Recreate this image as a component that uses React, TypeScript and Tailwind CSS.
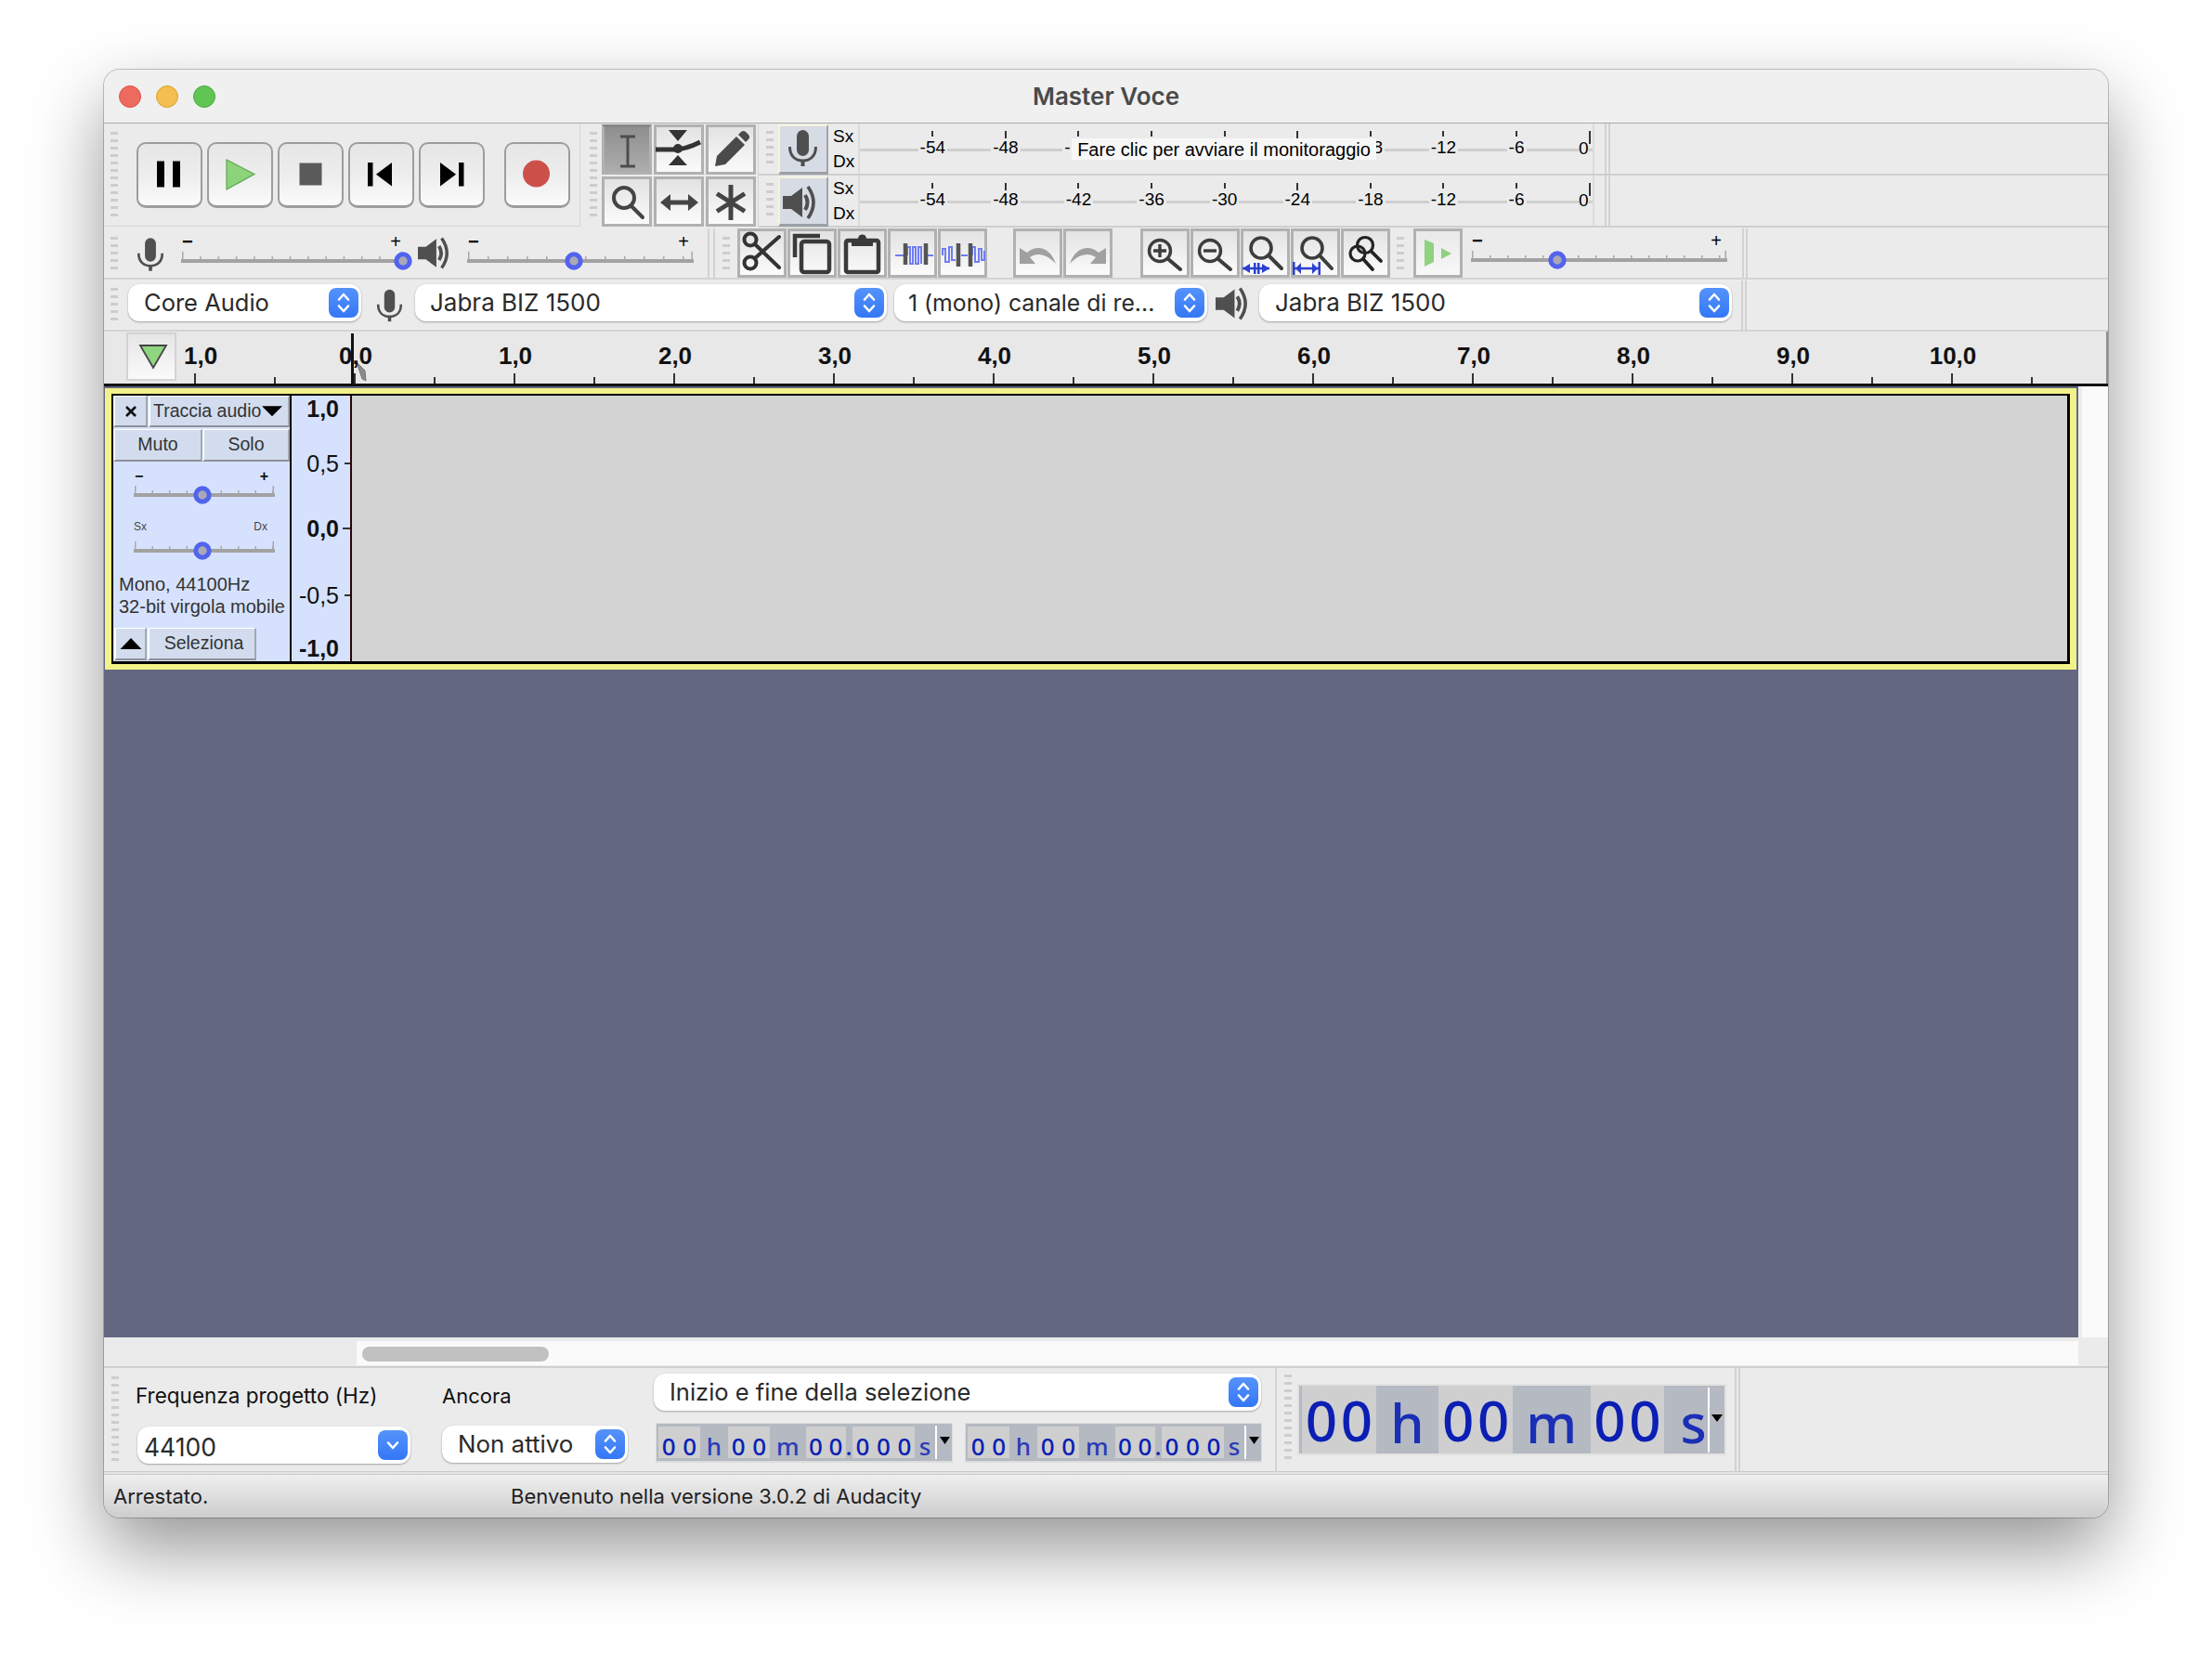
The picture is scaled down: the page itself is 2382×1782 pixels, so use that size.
import type { ReactNode } from "react";

const ARIAL = "[font-family:'Liberation_Sans',Arial,sans-serif]";
const SANS = "[font-family:Inter,sans-serif]";
const LCD = "[font-family:'Noto_Sans',sans-serif]";

const toolFrame =
  "flex shrink-0 items-center justify-center overflow-visible border-[3px] border-[#b1b1b1] bg-gradient-to-b";
const toolBtn = `${toolFrame} from-[#e3e3e3] to-[#fbfbfb]`;

function Grip({ className }: { className: string }) {
  return (
    <div
      className={`w-[8px] shrink-0 bg-[repeating-linear-gradient(to_bottom,#cdcdcd_0_3px,transparent_3px_8px)] ${className}`}
    />
  );
}

function DoubleSep({ wide }: { wide?: boolean }) {
  return (
    <div className={`flex h-full shrink-0 ${wide ? "gap-[4px]" : "gap-[2px]"}`}>
      <div className="w-[2px] bg-[#d2d2d2]" />
      <div className="w-[2px] bg-[#d2d2d2]" />
    </div>
  );
}

function Ico({ size = 53, children }: { size?: number; children: ReactNode }) {
  return (
    <svg viewBox={`0 0 ${size} ${size}`} width={size} height={size} className="-m-[3px] shrink-0 overflow-visible">
      {children}
    </svg>
  );
}

function TransportButton({ children }: { children: ReactNode }) {
  return (
    <button className="flex h-[71px] w-[71px] shrink-0 items-center justify-center rounded-[10px] border-2 border-b-[3px] border-[#9d9d9d] bg-gradient-to-b from-[#e6e6e6] via-[#ededed] to-[#fbfbfb]">
      <svg viewBox="0 0 71 71" width="71" height="71" className="-m-[2px] shrink-0">
        {children}
      </svg>
    </button>
  );
}

function MicShape() {
  return (
    <g fill="none" stroke="#4f4f4f">
      <rect x="20" y="6" width="13" height="28" rx="6.5" fill="#4f4f4f" stroke="none" />
      <path d="M12.5 24c0 10 6 15 14 15s14-5 14-15" strokeWidth="3" />
      <path d="M26.5 39v6" strokeWidth="4" />
    </g>
  );
}

function SpeakerShape() {
  return (
    <g fill="none" stroke="#4f4f4f">
      <path d="M5 21h9l12-9v32l-12-9H5z" fill="#4f4f4f" stroke="none" />
      <path d="M29 20q5 8 0 16" strokeWidth="4" />
      <path d="M32 11q12 17 0 34" strokeWidth="3.6" />
    </g>
  );
}

function Slider({
  width,
  thumb,
  step,
  minus,
  plus,
  labelClass,
  labelHeight,
}: {
  width: number;
  thumb: number;
  step: number;
  minus: ReactNode;
  plus: ReactNode;
  labelClass: string;
  labelHeight: string;
}) {
  const ticks: number[] = [];
  for (let x = 1; x < width - 1; x += step) ticks.push(x);
  return (
    <div className="shrink-0" style={{ width }}>
      <div className={`flex justify-between ${labelHeight} ${labelClass}`}>
        <span>{minus}</span>
        <span>{plus}</span>
      </div>
      <svg width={width} height="24" className="block overflow-visible">
        <rect x="0" y="10" width={width} height="4" fill="#a2a2a2" />
        {ticks.map((x, i) => (
          <rect key={x} x={x} y={i === 0 ? 2 : 7} width="1.5" height={i === 0 ? 9 : 4} fill="#a8a8a8" />
        ))}
        <rect x={width - 2.5} y="2" width="1.5" height="9" fill="#a8a8a8" />
        <circle cx={thumb} cy="12" r="7.2" fill="#a9a9b6" stroke="#5263ee" strokeWidth="5" />
      </svg>
    </div>
  );
}

function Stepper({ single }: { single?: boolean }) {
  return (
    <div className="flex h-[32px] w-[32px] shrink-0 items-center justify-center rounded-[8px] bg-gradient-to-b from-[#5593fb] to-[#3477f5]">
      <svg viewBox="0 0 32 32" width="32" height="32" fill="none" stroke="#fff" strokeWidth="2.6" strokeLinecap="round" strokeLinejoin="round">
        {single ? (
          <path d="M11 13.5l5 5.5 5-5.5" />
        ) : (
          <>
            <path d="M11 12.5l5-5.5 5 5.5" />
            <path d="M11 19.5l5 5.5 5-5.5" />
          </>
        )}
      </svg>
    </div>
  );
}

function Combo({
  text,
  className,
  single,
  textClass = "text-[25.5px]",
}: {
  text: string;
  className: string;
  single?: boolean;
  textClass?: string;
}) {
  return (
    <div
      className={`flex h-[40px] shrink-0 items-center justify-between rounded-[12px] bg-white pr-[3px] shadow-[0_1px_2px_rgba(0,0,0,0.3),0_0_1px_rgba(0,0,0,0.15)] ${className}`}
    >
      <span className={`${SANS} leading-none whitespace-nowrap text-[#2a2a2a] ${textClass}`}>{text}</span>
      <Stepper single={single} />
    </div>
  );
}

const METER_LABELS = [
  { t: "-54" },
  { t: "-48", tall: true },
  { t: "-42", covered: "-", shift: "-translate-x-[12px]" },
  { t: "-36", covered: "" },
  { t: "-30", covered: "" },
  { t: "-24", tall: true, covered: "" },
  { t: "-18", covered: "8", shift: "translate-x-[8px]" },
  { t: "-12" },
  { t: "-6" },
];

function MeterRow({ icon, overlay }: { icon: ReactNode; overlay?: boolean }) {
  return (
    <div className="flex h-[56px] items-stretch border-b-2 border-[#cfcfcf] bg-[#ebebeb]">
      <Grip className="mt-[8px] ml-[8px] h-[38px]" />
      <div className="mt-[1px] ml-[5px] flex h-[54px] w-[54px] shrink-0 items-center justify-center border-t-2 border-r-2 border-b-[3px] border-l-2 border-t-[#f3f3df] border-r-[#a0a4ac] border-b-[#9ca0a8] border-l-[#f3f3df] bg-[#d6dbe4]">
        <svg viewBox="0 0 54 54" width="54" height="54" className="shrink-0">
          {icon}
        </svg>
      </div>
      <div className={`${ARIAL} ml-[5px] flex w-[27px] shrink-0 flex-col text-[19px] leading-[27px] text-black`}>
        <span>Sx</span>
        <span>Dx</span>
      </div>
      <div className="relative flex w-[793px] shrink-0 border-r-2 border-l-2 border-[#dcdcdc] pl-[39px]">
        <div className="absolute top-[27px] right-0 left-0 h-[3px] bg-[#cfcfcf]" />
        {METER_LABELS.map((l) => {
          const text = overlay && l.covered !== undefined ? l.covered : l.t;
          return (
            <div key={l.t} className="relative flex w-[78.6px] shrink-0 flex-col items-center pt-[8px]">
              <div className={`w-[2px] bg-[#333] ${l.tall ? "h-[8px]" : "h-[6px]"}`} />
              {text && (
                <span
                  className={`${ARIAL} bg-[#ebebeb] px-[2px] text-[19px] leading-[20px] text-black ${l.tall ? "" : "pt-[2px]"} ${overlay && l.shift ? l.shift : ""}`}
                >
                  {text}
                </span>
              )}
            </div>
          );
        })}
        <div className="relative ml-[28px] flex w-[10px] shrink-0 flex-col items-center pt-[17px]">
          <span className={`${ARIAL} bg-[#ebebeb] text-[19px] leading-[20px] text-black`}>0</span>
        </div>
        <div className="relative mt-[8px] ml-[1px] h-[14px] w-[2px] bg-[#333]" />
        {overlay && (
          <div className={`${ARIAL} absolute top-[16px] left-[228px] flex h-[23px] w-[328px] items-center justify-center bg-[#f7f7f7] text-[20px] whitespace-nowrap text-black`}>
            Fare clic per avviare il monitoraggio
          </div>
        )}
      </div>
      <div className="ml-[11px]">
        <DoubleSep />
      </div>
    </div>
  );
}

function Digits({ text, w, className }: { text: string; w: string; className: string }) {
  return (
    <span className={`flex h-full items-center justify-center ${className}`}>
      {text.split("").map((d, i) => (
        <span key={i} className={`block text-center ${w}`}>
          {d}
        </span>
      ))}
    </span>
  );
}

function SmallTime() {
  const cell = "bg-[#cfcfcf] pt-[8px]";
  const unit = "pt-[8px] justify-center";
  return (
    <div className={`${LCD} flex h-[43px] w-[320px] shrink-0 items-center border border-b-2 border-[#dcdcdc] bg-[#b5b9c2] pr-0 pl-[2px] text-[26px] font-medium text-[#0b1fb4]`}>
      <div className="flex h-[34px] w-[298px] shrink-0">
        <Digits text="00" w="w-[22.5px]" className={cell} />
        <span className={`flex w-[30px] items-center text-[#2a3cb8] ${unit}`}>h</span>
        <Digits text="00" w="w-[22.5px]" className={cell} />
        <span className={`flex w-[39px] items-center text-[#2a3cb8] ${unit}`}>m</span>
        <Digits text="00" w="w-[21.5px]" className={cell} />
        <span className="flex w-[7px] items-center justify-center pt-[8px]">.</span>
        <Digits text="000" w="w-[22.5px]" className={cell} />
        <span className={`flex w-[22px] items-center text-[#2a3cb8] ${unit}`}>s</span>
      </div>
      <div className="h-[36px] w-[2px] shrink-0 bg-white" />
      <svg width="17" height="10" viewBox="0 0 17 10" className="mb-[4px] shrink-0">
        <path d="M3 1h11l-5.5 8z" fill="#000" />
      </svg>
    </div>
  );
}

function BigTime() {
  const cell = "bg-[#cfcfcf]";
  const unit = "flex items-center justify-center pt-[6px] text-[#1a2fb6]";
  return (
    <div className={`${LCD} mt-[17px] ml-[6px] flex h-[77px] w-[462px] shrink-0 items-center border-2 border-[#e2e2e2] bg-[#b5b9c2] pl-[3px] text-[60px] leading-none font-medium text-[#0b1fb4]`}>
      <Digits text="00" w="w-[38px]" className={`${cell} h-[68px] w-[80px]`} />
      <span className={`${unit} w-[68px] text-[58px]`}>h</span>
      <Digits text="00" w="w-[38px]" className={`${cell} h-[68px] w-[80px]`} />
      <span className={`${unit} w-[84px] text-[58px]`}>m</span>
      <Digits text="00" w="w-[38px]" className={`${cell} h-[68px] w-[80px]`} />
      <span className={`${unit} w-[47px] pl-[16px] text-[58px]`}>s</span>
      <div className="h-[70px] w-[2px] shrink-0 bg-white" />
      <svg width="16" height="10" viewBox="0 0 16 10" className="mb-[4px] shrink-0">
        <path d="M2 1h12l-6 8z" fill="#000" />
      </svg>
    </div>
  );
}

function TrackBtn({ className, children }: { className: string; children: ReactNode }) {
  return (
    <div
      className={`${ARIAL} flex shrink-0 items-center justify-center border-t border-r-2 border-b-2 border-l-2 border-t-white border-r-[#a3a8b0] border-b-[#8d9096] border-l-white bg-[#d2dcee] text-[19.5px] whitespace-nowrap text-[#333] ${className}`}
    >
      {children}
    </div>
  );
}

function TrackPanel() {
  return (
    <div className="flex w-[190px] shrink-0 flex-col bg-[#d6e2fd]">
      <div className="flex gap-[1px]">
        <TrackBtn className="h-[34px] w-[37px]">
          <svg width="14" height="14" viewBox="0 0 14 14">
            <path d="M2 2l10 10M12 2L2 12" stroke="#111" strokeWidth="2.6" />
          </svg>
        </TrackBtn>
        <TrackBtn className="h-[34px] w-[152px] justify-start gap-[1px] pl-[3px]">
          <span>Traccia audio</span>
          <svg width="22" height="12" viewBox="0 0 23 12" className="shrink-0">
            <path d="M0 0h23l-11.5 11.5z" fill="#000" />
          </svg>
        </TrackBtn>
      </div>
      <div className="mt-[2px] flex">
        <TrackBtn className="h-[35px] w-[96px]">Muto</TrackBtn>
        <TrackBtn className="h-[35px] w-[94px]">Solo</TrackBtn>
      </div>
      <div className="mt-[8px] ml-[22px]">
        <Slider
          width={152}
          thumb={74}
          step={18.5}
          minus={<span className="pl-[1px] font-bold">−</span>}
          plus={<span className="pr-[7px] font-bold">+</span>}
          labelClass={`${ARIAL} text-[16px] leading-[16px] text-[#111]`}
          labelHeight="h-[16px]"
        />
      </div>
      <div className="mt-[14px] ml-[22px]">
        <Slider
          width={152}
          thumb={74}
          step={18.5}
          minus="Sx"
          plus={<span className="pr-[8px]">Dx</span>}
          labelClass={`${ARIAL} text-[12px] leading-[16px] text-[#444]`}
          labelHeight="h-[22px]"
        />
      </div>
      <div className={`${ARIAL} mt-[12px] ml-[6px] text-[20px] leading-[24px] whitespace-nowrap text-[#333]`}>
        <div>Mono, 44100Hz</div>
        <div>32-bit virgola mobile</div>
      </div>
      <div className="mt-auto mb-[1px] flex gap-[1px] pl-[1px]">
        <TrackBtn className="h-[35px] w-[35px]">
          <svg width="24" height="12" viewBox="0 0 24 12">
            <path d="M12 0l11.5 12H.5z" fill="#000" />
          </svg>
        </TrackBtn>
        <TrackBtn className="h-[35px] w-[117px] pl-[4px]">Seleziona</TrackBtn>
      </div>
    </div>
  );
}

const AMP_LABELS = [
  { t: "1,0", bold: true, mt: "mt-[1px]", tick: "" },
  { t: "0,5", mt: "mt-[33px]", tick: "w-[6px]" },
  { t: "0,0", bold: true, mt: "mt-[44px]", tick: "w-[8px]" },
  { t: "-0,5", mt: "mt-[46px]", tick: "w-[6px]" },
  { t: "-1,0", bold: true, mt: "mt-[31px]", tick: "" },
];

function AmpRuler() {
  return (
    <div className={`${ARIAL} w-[63px] shrink-0 bg-[#d6e2fd] text-[25px] text-[#111]`}>
      {AMP_LABELS.map((l) => (
        <div key={l.t} className={`flex h-[26px] items-center ${l.mt} ${l.bold ? "font-bold" : ""}`}>
          <span className="ml-auto leading-none">{l.t}</span>
          <span className="ml-[2px] flex w-[10px] justify-end">
            {l.tick && <span className={`h-[2px] bg-[#333] ${l.tick}`} />}
          </span>
        </div>
      ))}
    </div>
  );
}

export default function App() {
  const rulerLabels = ["0,0", "1,0", "2,0", "3,0", "4,0", "5,0", "6,0", "7,0", "8,0", "9,0", "10,0"];
  const rulerTicks: number[] = [];
  for (let n = -1; n <= 10; n++) rulerTicks.push(269 + 172 * n);

  return (
    <div className="h-[1782px] w-[2382px] overflow-hidden bg-white pt-[75px] pl-[112px]">
      <div className="flex h-[1559px] w-[2158px] flex-col overflow-hidden rounded-[17px] bg-[#ebebeb] shadow-[0_0_0_1px_rgba(0,0,0,0.22),0_34px_80px_rgba(0,0,0,0.42)]">
        {/* title bar */}
        <div className="grid h-[58px] shrink-0 grid-cols-[1fr_auto_1fr] items-center border-b border-[#aaaaaa] bg-[#f0f0f0] pl-[16px]">
          <div className="flex gap-[16px]">
            <div className="h-[24px] w-[24px] rounded-full border border-[#d9534a] bg-[#ed6a5e]" />
            <div className="h-[24px] w-[24px] rounded-full border border-[#d9a32f] bg-[#f4bf4f]" />
            <div className="h-[24px] w-[24px] rounded-full border border-[#4aa83e] bg-[#61c554]" />
          </div>
          <div className={`${SANS} pr-[16px] text-[26px] font-semibold text-[#4a4a4a]`}>Master Voce</div>
        </div>

        {/* transport, tools and meters */}
        <div className="flex h-[112px] shrink-0 bg-[#ebebeb]">
          <div className="flex h-[111px] w-[513px] shrink-0 items-center border-r border-b border-[#d4d4d4]">
            <Grip className="ml-[7px] h-[92px]" />
            <div className="ml-[20px] flex gap-[5px]">
              <TransportButton>
                <rect x="22" y="21.5" width="8" height="28" fill="#000" />
                <rect x="39" y="21.5" width="8" height="28" fill="#000" />
              </TransportButton>
              <TransportButton>
                <path d="M21 20l30 15.5L21 52z" fill="#8bd47a" stroke="#61a653" strokeWidth="1.2" />
              </TransportButton>
              <TransportButton>
                <rect x="23.5" y="23.5" width="24" height="24" fill="#5a5a5a" />
              </TransportButton>
              <TransportButton>
                <rect x="21" y="23" width="5.5" height="25.5" fill="#000" />
                <path d="M47 23v25.5L30 35.7z" fill="#000" />
              </TransportButton>
              <TransportButton>
                <path d="M23 23v25.5l17-12.8z" fill="#000" />
                <rect x="43" y="23" width="5.5" height="25.5" fill="#000" />
              </TransportButton>
            </div>
            <div className="ml-[21px]">
              <TransportButton>
                <circle cx="34.5" cy="35" r="14.5" fill="#cc4f4a" />
              </TransportButton>
            </div>
          </div>

          <Grip className="mt-[9px] ml-[10px] h-[92px]" />
          <div className="mt-[1px] ml-[5px] grid h-[110px] grid-cols-[repeat(3,54px)] grid-rows-[repeat(2,54px)] gap-[2px]">
            <div className={`${toolFrame} border-[#a9a9a9] border-t-[#868686] from-[#8f8f8f] to-[#adadad]`}>
              <Ico size={54}>
                <path d="M20 13h16M28 13v32M20 45h16" stroke="#4d4d4d" strokeWidth="3" fill="none" />
              </Ico>
            </div>
            <div className={toolBtn}>
              <Ico size={54}>
                <path d="M16 6h20L26 18zM26 33l10 11H16z" fill="#333" />
                <path d="M2 27h20c9 0 18-3 28-8" stroke="#333" strokeWidth="5" fill="none" />
                <circle cx="26" cy="26" r="5" fill="#333" />
              </Ico>
            </div>
            <div className={toolBtn}>
              <Ico size={54}>
                <path d="M10 45l2-11 21-21 9 9-21 21z" fill="#4a4a4a" />
                <path d="M35 11l3-3c1.500-1.500 3.500-1.500 5 0l3 3c1.500 1.500 1.500 3.500 0 5l-3 3z" fill="#4a4a4a" />
              </Ico>
            </div>
            <div className={toolBtn}>
              <Ico size={54}>
                <circle cx="24" cy="23" r="11" fill="none" stroke="#444" strokeWidth="4" />
                <path d="M32 32l12 12" stroke="#444" strokeWidth="4" strokeLinecap="round" />
              </Ico>
            </div>
            <div className={toolBtn}>
              <Ico size={54}>
                <path d="M17 28h21" stroke="#444" strokeWidth="5" />
                <path d="M7 28l11-9v18zM48 28l-11-9v18z" fill="#444" />
              </Ico>
            </div>
            <div className={toolBtn}>
              <Ico size={54}>
                <path d="M27 9v38M12 18.500l30 19M42 18.500l-30 19" stroke="#444" strokeWidth="5" />
              </Ico>
            </div>
          </div>

          <div className="ml-[2px] h-[111px] w-px shrink-0 bg-[#d4d4d4]" />

          <div className="w-[912px] shrink-0">
            <MeterRow overlay icon={<MicShape />} />
            <MeterRow icon={<SpeakerShape />} />
          </div>
          <div className="h-[112px] flex-1">
            <div className="h-[56px] border-b-2 border-[#cfcfcf]" />
            <div className="h-[56px] border-b-2 border-[#cfcfcf]" />
          </div>
        </div>

        {/* volume sliders and edit toolbar */}
        <div className="flex h-[56px] shrink-0 items-start border-b-2 border-[#d4d4d4] pt-[1px]">
          <Grip className="mt-[9px] ml-[7px] h-[36px]" />
          <svg viewBox="10 5 33 41" width="30" height="38" className="mt-[9px] ml-[20px] shrink-0">
            <MicShape />
          </svg>
          <div className="mt-[5px] ml-[18px]">
            <Slider
              width={239}
              thumb={239}
              step={19.3}
              minus={<span className="pl-[1px] font-bold">−</span>}
              plus={<span>+</span>}
              labelClass={`${ARIAL} text-[20px] leading-[18px] text-black`}
              labelHeight="h-[18px] pr-[2px]"
            />
          </div>
          <svg viewBox="5 10 38 36" width="36" height="35" className="mt-[9px] ml-[16px] shrink-0">
            <SpeakerShape />
          </svg>
          <div className="mt-[5px] ml-[17px]">
            <Slider
              width={244}
              thumb={115}
              step={21}
              minus={<span className="pl-[1px] font-bold">−</span>}
              plus={<span>+</span>}
              labelClass={`${ARIAL} text-[20px] leading-[18px] text-black`}
              labelHeight="h-[18px] pr-[5px]"
            />
          </div>
          <div className="ml-[15px] h-[54px]">
            <DoubleSep wide />
          </div>
          <Grip className="mt-[9px] ml-[8px] h-[36px]" />
          <div className="ml-[8px] flex gap-[1px]">
            <div className={`${toolBtn} h-[53px] w-[53px]`}>
              <Ico>
                <g fill="none" stroke="#333" strokeWidth="4" strokeLinecap="round">
                  <circle cx="14" cy="12" r="6.5" />
                  <circle cx="14" cy="37" r="6.5" />
                  <path d="M19 17l26 25M19 32L45 9" />
                </g>
              </Ico>
            </div>
            <div className={`${toolBtn} h-[53px] w-[53px]`}>
              <Ico>
                <rect x="15" y="14" width="30" height="33" rx="3" fill="none" stroke="#3a3a3a" strokeWidth="4.5" />
                <path d="M8 31V8h27" fill="none" stroke="#3a3a3a" strokeWidth="4.5" />
              </Ico>
            </div>
            <div className={`${toolBtn} h-[53px] w-[53px]`}>
              <Ico>
                <rect x="9" y="13" width="35" height="34" rx="2" fill="none" stroke="#3a3a3a" strokeWidth="4.5" />
                <path d="M15 11h7c0-6 9-6 9 0h7v8H15z" fill="#3a3a3a" />
              </Ico>
            </div>
            <div className={`${toolBtn} h-[53px] w-[53px]`}>
              <Ico>
                <path d="M8 29h9M21 29v-9h3v18h3V20h3v18h3V20h3v18M42 29h7" fill="none" stroke="#6f7df0" strokeWidth="2" />
                <path d="M19 16v23M41 16v23" stroke="#555" strokeWidth="4.5" />
              </Ico>
            </div>
            <div className={`${toolBtn} h-[53px] w-[53px]`}>
              <Ico>
                <path d="M5 29v-7h3v14h4V20h3v14h4M25 29h7M37 29v-9h3v16h4V22h3v12h3V24" fill="none" stroke="#6f7df0" strokeWidth="2" />
                <path d="M22 16v25M35 16v25" stroke="#555" strokeWidth="4.5" />
              </Ico>
            </div>
          </div>
          <div className="ml-[28px] flex gap-[1px]">
            <div className={`${toolBtn} h-[53px] w-[53px]`}>
              <Ico>
                <path d="M7 21v17h17l-6-7c8-6 19-3 28 7-6-18-21-21-31-12z" fill="#a0a0a0" />
              </Ico>
            </div>
            <div className={`${toolBtn} h-[53px] w-[53px]`}>
              <Ico>
                <path d="M46 21v17H29l6-7c-8-6-19-3-28 7 6-18 21-21 31-12z" fill="#a0a0a0" />
              </Ico>
            </div>
          </div>
          <div className="ml-[30px] flex gap-[1px]">
            <div className={`${toolBtn} h-[53px] w-[53px]`}>
              <Ico>
                <g fill="none" stroke="#3d3d3d" strokeWidth="3.4">
                  <circle cx="21" cy="24" r="11.500" />
                  <path d="M30 33l13 11" strokeWidth="4" strokeLinecap="round" />
                  <path d="M21 17v14M14 24h14" />
                </g>
              </Ico>
            </div>
            <div className={`${toolBtn} h-[53px] w-[53px]`}>
              <Ico>
                <g fill="none" stroke="#3d3d3d" strokeWidth="3.4">
                  <circle cx="21" cy="24" r="11.500" />
                  <path d="M30 33l13 11" strokeWidth="4" strokeLinecap="round" />
                  <path d="M14 24h14" />
                </g>
              </Ico>
            </div>
            <div className={`${toolBtn} h-[53px] w-[53px]`}>
              <Ico>
                <g fill="none" stroke="#3d3d3d" strokeWidth="3.6">
                  <circle cx="22" cy="21" r="11" />
                  <path d="M30 29l14 14" strokeWidth="4" strokeLinecap="round" />
                </g>
                <path d="M2 43h29" stroke="#2b3fd0" strokeWidth="2.500" />
                <path d="M2 43l8-5v10zM31 43l-8-5v10zM14 37h2.500v12H14zM18 37h2.500v12H18z" fill="#2b3fd0" />
              </Ico>
            </div>
            <div className={`${toolBtn} h-[53px] w-[53px]`}>
              <Ico>
                <g fill="none" stroke="#3d3d3d" strokeWidth="3.6">
                  <circle cx="23" cy="21" r="11" />
                  <path d="M31 29l13 14" strokeWidth="4" strokeLinecap="round" />
                </g>
                <path d="M4 43h27" stroke="#2b3fd0" strokeWidth="2.500" />
                <path d="M2 36h2.500v14H2zM5 43l6-6v12zM32 36h-2.500v14H32zM29 43l-6-6v12z" fill="#2b3fd0" />
              </Ico>
            </div>
            <div className={`${toolBtn} h-[53px] w-[53px]`}>
              <Ico>
                <g fill="none" stroke="#222" strokeWidth="3.2">
                  <circle cx="26" cy="18" r="8.500" />
                  <circle cx="18" cy="27" r="8" />
                  <path d="M33 25l10 10M24 33l10 11" strokeWidth="3.8" strokeLinecap="round" />
                </g>
              </Ico>
            </div>
          </div>
          <Grip className="mt-[9px] ml-[7px] h-[36px]" />
          <div className={`${toolFrame} ml-[10px] h-[53px] w-[53px] from-[#e9e9e9] to-[#f8f8f8]`}>
            <Ico>
              <path d="M12 12l10 4v20l-10 5z" fill="#8fd280" />
              <path d="M30 21l11 6-11 6z" fill="#8fd280" />
            </Ico>
          </div>
          <div className="mt-[4px] ml-[9px]">
            <Slider
              width={276}
              thumb={93}
              step={19}
              minus={<span className="pl-[1px] font-bold">−</span>}
              plus={<span>+</span>}
              labelClass={`${ARIAL} text-[20px] leading-[18px] text-black`}
              labelHeight="h-[18px] pr-[6px]"
            />
          </div>
          <div className="ml-[16px] h-[54px]">
            <DoubleSep />
          </div>
        </div>

        {/* device selectors */}
        <div className="flex h-[56px] shrink-0 items-start border-b-2 border-[#d4d4d4] pt-[5px]">
          <Grip className="mt-[4px] ml-[7px] h-[36px]" />
          <Combo text="Core Audio" className="ml-[11px] w-[251px] pl-[17px]" />
          <svg viewBox="10 5 33 41" width="29" height="38" className="mt-[4px] ml-[16px] shrink-0">
            <MicShape />
          </svg>
          <Combo text="Jabra BIZ 1500" textClass="text-[26px]" className="ml-[13px] w-[508px] pl-[16px]" />
          <Combo text="1 (mono) canale di re..." textClass="text-[24.8px]" className="ml-[8px] w-[337px] pl-[15px]" />
          <svg viewBox="5 10 38 36" width="37" height="36" className="mt-[3px] ml-[9px] shrink-0">
            <SpeakerShape />
          </svg>
          <Combo text="Jabra BIZ 1500" textClass="text-[26px]" className="ml-[10px] w-[509px] pl-[17px]" />
          <div className="-mt-[4px] ml-[10px] h-[54px]">
            <DoubleSep />
          </div>
        </div>

        {/* time ruler */}
        <div className="relative flex h-[56px] shrink-0 items-start border-r-2 border-[#8f8f8f] bg-[#e8e8e8]">
          <svg className="absolute inset-0 h-full w-full" aria-hidden="true">
            {rulerTicks.map((x) => (
              <g key={x} fill="#333">
                <rect x={x} y="45" width="2" height="11" />
                <rect x={x + 86} y="49" width="2" height="7" />
              </g>
            ))}
            <rect x="266" y="2" width="3" height="54" fill="#111" />
            <path d="M272 33l6 18 4 2-1-11z" fill="#8b8b8b" stroke="#777" />
          </svg>
          <div className="mt-[1px] ml-[24px] flex h-[52px] w-[54px] shrink-0 items-center justify-center border-2 border-[#d3d3d3] bg-gradient-to-b from-[#e6e6e6] to-[#fafafa] pl-[3px]">
            <svg width="32" height="28" viewBox="0 0 32 28">
              <path d="M2 2h28L16 26z" fill="#90d580" stroke="#444" strokeWidth="1.8" />
            </svg>
          </div>
          <div className={`${ARIAL} relative flex items-center pt-[13px] text-[26px] leading-[26px] font-bold text-[#111]`}>
            <span className="w-[106px] pl-[8px]">1,0</span>
            {rulerLabels.map((t) => (
              <span key={t} className="w-[172px] pl-[2px] text-center">
                {t}
              </span>
            ))}
          </div>
        </div>
        <div className="h-[3px] shrink-0 bg-[#111]" />

        {/* track area */}
        <div className="flex h-[1024px] shrink-0">
          <div className="w-[2126px] shrink-0 bg-[#636780] pt-[2px] pl-px">
            <div className="flex h-[303px] w-[2123px] border-[7px] border-t-[6px] border-b-[6px] border-[#f2f28a] shadow-[inset_0_0_0_1px_#b8b88a]">
              <div className="flex flex-1 border-t-2 border-r-[3px] border-b-[3px] border-l-2 border-black bg-[#d3d3d3]">
                <TrackPanel />
                <div className="w-[2px] shrink-0 bg-black" />
                <AmpRuler />
                <div className="w-[2px] shrink-0 bg-[#2a0505]" />
              </div>
            </div>
          </div>
          <div className="w-[32px] border-l-4 border-[#ececec] bg-[#fafafa]" />
        </div>

        {/* horizontal scrollbar */}
        <div className="flex h-[33px] shrink-0 border-b-2 border-[#cfcfcf] pt-[4px] pl-[272px]">
          <div className="h-[26px] w-[1854px] bg-[#fafafa] pt-[6px] pl-[6px]">
            <div className="h-[16px] w-[201px] rounded-full bg-[#c1c1c1]" />
          </div>
        </div>

        {/* selection toolbar */}
        <div className="flex h-[111px] shrink-0">
          <Grip className="mt-[9px] ml-[8px] h-[91px]" />
          <div className="ml-[18px] w-[300px] shrink-0 pt-[15px]">
            <div className={`${SANS} h-[30px] text-[22.5px] leading-[30px] whitespace-nowrap text-[#111]`}>Frequenza progetto (Hz)</div>
            <Combo text="44100" single textClass="pt-[5px] text-[26.5px]" className="mt-[18px] ml-[2px] w-[294px] pl-[7px]" />
          </div>
          <div className="ml-[30px] w-[200px] shrink-0 pt-[15px]">
            <div className={`${SANS} h-[30px] text-[22px] leading-[30px] text-[#111]`}>Ancora</div>
            <Combo text="Non attivo" textClass="text-[25.9px]" className="mt-[17px] w-[200px] pl-[17px]" />
          </div>
          <div className="ml-[28px] w-[656px] shrink-0 pt-[6px]">
            <Combo text="Inizio e fine della selezione" className="w-[654px] pl-[17px]" />
            <div className="mt-[13px] flex gap-[13px] pl-[2px]">
              <SmallTime />
              <SmallTime />
            </div>
          </div>
          <div className="ml-[13px] h-[111px] w-[2px] shrink-0 bg-[#d4d4d4]" />
          <Grip className="mt-[7px] ml-[8px] h-[92px]" />
          <BigTime />
          <div className="ml-[9px] h-[111px]">
            <DoubleSep />
          </div>
        </div>

        {/* status bar */}
        <div className="h-[4px] shrink-0 border-y border-[#cacaca] bg-[#e4e4e4]" />
        <div className={`${SANS} flex h-[46px] flex-1 items-center bg-gradient-to-b from-[#efefef] to-[#cdcdcf] pl-[10px] text-[22px] text-[#222]`}>
          <span className="w-[428px] shrink-0">Arrestato.</span>
          <span>Benvenuto nella versione 3.0.2 di Audacity</span>
        </div>
      </div>
    </div>
  );
}
